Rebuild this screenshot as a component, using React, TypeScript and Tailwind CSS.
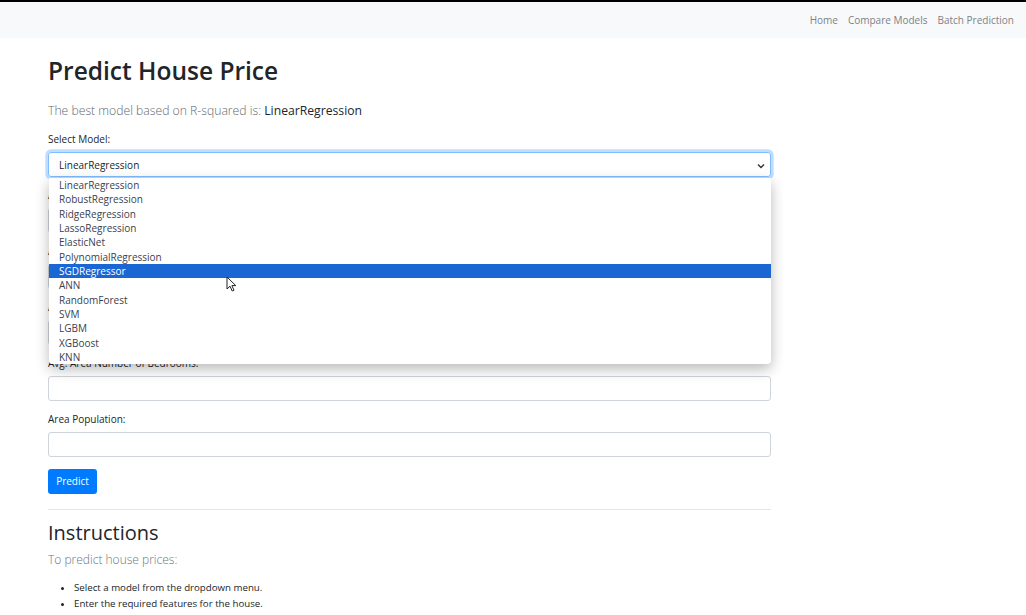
import React from "react";

const models = [
    'LinearRegression',
    'RobustRegression',
    'RidgeRegression',
    'LassoRegression',
    'ElasticNet',
    'PolynomialRegression',
    'SGDRegressor',
    'ANN',
    'RandomForest',
    'SVM',
    'LGBM',
    'XGBoost',
    'KNN',
];

const fields = [
    'Avg. Area Income:',
    'Avg. Area House Age:',
    'Avg. Area Number of Rooms:',
    'Avg. Area Number of Bedrooms:',
    'Area Population:',
];

const Cursor = () => (
    <svg className={'absolute left-[226px] top-[274px] z-20'} width="11" height="16" viewBox="0 0 11 16">
        <path d="M1 1 L1 13 L4 10.2 L6.2 15 L8 14.2 L5.9 9.6 L9.8 9.6 Z" fill="#fff" stroke="#222" strokeWidth="1"
              strokeLinejoin="round"/>
    </svg>
);

const App = () => {
    return (
        <div className={"relative min-h-screen bg-white border-t-2 border-black text-[#212529] font-['Open_Sans','Noto_Sans',sans-serif]"}>
            <nav className={'h-[36px] bg-[#f8f9fa] flex justify-end items-center pr-[7px] text-[10px] text-[#7d8288]'}>
                <a className={'px-[5px]'}>Home</a>
                <a className={'px-[5px]'}>Compare Models</a>
                <a className={'px-[5px]'}>Batch Prediction</a>
            </nav>

            <main className={'ml-[48px] w-[723px]'}>
                <h1 className={'mt-[17px] mb-[14px] text-[24.5px] leading-[32px] font-semibold'}>Predict House Price</h1>
                <p className={'text-[12.2px] leading-[20px] font-light text-[#62696f] mb-[10px]'}>
                    The best model based on R-squared is: <span className={'text-[#212529] font-normal'}>LinearRegression</span>
                </p>

                <form onSubmit={(e) => e.preventDefault()}>
                    <div className={'mb-[10px]'}>
                        <label className={'block text-[10px] leading-[16px] mb-[5px]'}>Select Model:</label>
                        <div className={'relative'}>
                            <div className={'h-[25px] flex items-center justify-between pl-[10px] pr-[5px] pt-[2px] border border-[#80bdff] rounded-[3px] shadow-[0_0_0_2.7px_rgba(0,123,255,0.25)] text-[10px]'}>
                                <span>LinearRegression</span>
                                <svg width="8" height="6" viewBox="0 0 8 6">
                                    <path d="M1 1.5 L4 4.5 L7 1.5" fill="none" stroke="#333" strokeWidth="1.4"/>
                                </svg>
                            </div>
                            <ul className={'absolute left-[1px] right-0 top-[26px] z-10 bg-white rounded-b-[4px] shadow-[0_5px_14px_rgba(0,0,0,0.28)] overflow-hidden'}>
                                {models.map((m) => (
                                    <li key={m}
                                        className={`${m === 'SGDRegressor' ? 'bg-[#1a66d2] text-white' : 'text-[#3a4150]'} h-[14.33px] leading-[14.33px] pl-[10px] text-[10px]`}>
                                        {m}
                                    </li>
                                ))}
                            </ul>
                        </div>
                    </div>

                    {fields.map((f) => (
                        <div key={f} className={'mb-[10px]'}>
                            <label className={'block text-[10px] leading-[16px] mb-[5px]'}>{f}</label>
                            <input className={'block w-full h-[25px] border border-[#ced4da] rounded-[3px] bg-white'} type="text"/>
                        </div>
                    ))}

                    <button type={'submit'}
                            className={'mt-[1px] h-[25px] w-[49px] bg-[#007bff] text-white text-[10px] font-medium rounded-[3px]'}>
                        Predict
                    </button>
                </form>

                <hr className={'mt-[15px] mb-[10px] border-t border-[#e5e5e5]'}/>

                <h2 className={'text-[20px] leading-[26px] font-medium mb-[4px]'}>Instructions</h2>
                <p className={'text-[12px] leading-[20px] font-light text-[#6c757d] mb-[10px]'}>To predict house prices:</p>
                <ul className={'list-disc pl-[26px] text-[9.7px] leading-[16px]'}>
                    <li>Select a model from the dropdown menu.</li>
                    <li>Enter the required features for the house.</li>
                </ul>
            </main>

            <Cursor/>
        </div>
    );
};

export default App;
